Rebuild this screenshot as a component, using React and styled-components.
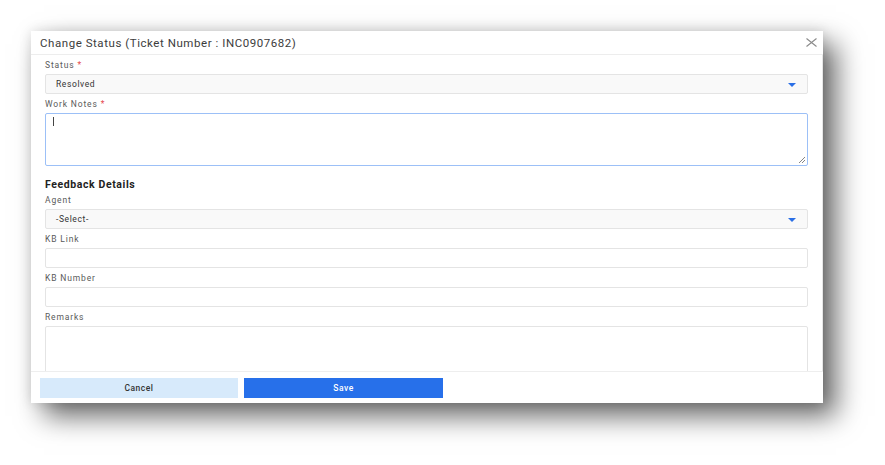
import React from 'react'
import styled, { createGlobalStyle } from 'styled-components'

const GlobalStyle = createGlobalStyle`
  html, body {
    margin: 0;
    padding: 0;
    background: #ffffff;
    font-family: Roboto, "Liberation Sans", Arial, sans-serif;
  }
`

const Page = styled.div`
  width: 885px;
  height: 465px;
  padding: 31px 0 0 31px;
  box-sizing: border-box;
  overflow: hidden;
`

const Dialog = styled.div`
  width: 792px;
  height: 372px;
  background: #fff;
  display: flex;
  flex-direction: column;
  box-shadow: 13px 13px 26px rgba(0, 0, 0, 0.6), 0 0 12px rgba(0, 0, 0, 0.12);
`

const Header = styled.div`
  height: 24px;
  box-sizing: border-box;
  flex: none;
  display: flex;
  align-items: center;
  justify-content: space-between;
  padding: 0 6px 0 9px;
  border-bottom: 1px solid #ededed;
`

const Title = styled.h2`
  margin: 0;
  font-size: 11.5px;
  font-weight: 400;
  letter-spacing: 0.55px;
  color: #3c3c3c;
`

const Close = styled.button`
  border: 0;
  background: none;
  padding: 0;
  width: 12px;
  height: 12px;
  display: flex;
  align-items: center;
  justify-content: center;
  cursor: pointer;
`

const Body = styled.div`
  flex: 1;
  overflow: hidden;
  padding: 0 14px 0 14px;
  border-right: 1px solid #e6e6e6;
`

const Label = styled.label`
  display: block;
  height: 19px;
  line-height: 21px;
  font-size: 8.5px;
  letter-spacing: 0.85px;
  color: #5a5a5a;
`

const Req = styled.span`
  color: #e5484d;
  margin-left: 3px;
`

const SelectBox = styled.div`
  height: 20px;
  box-sizing: border-box;
  border: 1px solid #e4e4e4;
  border-radius: 2px;
  background: #f9f9f9;
  display: flex;
  align-items: center;
  justify-content: space-between;
  padding: 0 11px 0 10px;
  font-size: 8.5px;
  letter-spacing: 0.6px;
  color: #333;
`

const Arrow = styled.span`
  width: 0;
  height: 0;
  border-left: 4px solid transparent;
  border-right: 4px solid transparent;
  border-top: 4px solid #2a6fe6;
  margin-top: 1px;
`

const TextBox = styled.div`
  position: relative;
  height: ${p => p.$h}px;
  box-sizing: border-box;
  border: 1px solid ${p => (p.$focus ? '#9cc0f7' : '#e4e4e4')};
  border-radius: 2px;
  background: #fff;
  padding: 3px 7px;
`

const Caret = styled.span`
  display: block;
  width: 1px;
  height: 9px;
  background: #444;
`

const Grip = styled.svg`
  position: absolute;
  right: 1px;
  bottom: 1px;
`

const Section = styled.h3`
  margin: 0;
  height: 24px;
  padding-top: 12px;
  box-sizing: border-box;
  line-height: 14px;
  font-size: 10.5px;
  font-weight: 700;
  letter-spacing: 0.6px;
  color: #222;
`

const Footer = styled.div`
  height: 32px;
  flex: none;
  border-top: 1px solid #eeeeee;
  box-sizing: border-box;
  display: flex;
  align-items: flex-start;
  gap: 6px;
  padding: 6px 0 0 9px;
`

const Button = styled.button`
  width: ${p => p.$w}px;
  height: 20px;
  border: 0;
  border-radius: 0;
  font-family: inherit;
  font-size: 8.5px;
  font-weight: 500;
  letter-spacing: 0.5px;
  background: ${p => (p.$primary ? '#2770ea' : '#d7eafb')};
  color: ${p => (p.$primary ? '#fff' : '#333')};
`

const Field = ({ label, required, children }) => (
  <>
    <Label>
      {label}
      {required && <Req>*</Req>}
    </Label>
    {children}
  </>
)

export default function App() {
  return (
    <Page>
      <GlobalStyle />
      <Dialog>
        <Header>
          <Title>Change Status (Ticket Number : INC0907682)</Title>
          <Close aria-label="close">
            <svg width="11" height="9" viewBox="0 0 11 9">
              <path d="M0.5 0.5 L10.5 8.5 M10.5 0.5 L0.5 8.5" stroke="#8a8a8a" strokeWidth="1.1" />
            </svg>
          </Close>
        </Header>
        <Body>
          <Field label="Status" required>
            <SelectBox>
              Resolved
              <Arrow />
            </SelectBox>
          </Field>
          <Field label="Work Notes" required>
            <TextBox $h={53} $focus>
              <Caret />
              <Grip width="8" height="8" viewBox="0 0 8 8">
                <path d="M7 1 L1 7 M7 4 L4 7" stroke="#777" strokeWidth="0.9" />
              </Grip>
            </TextBox>
          </Field>
          <Section>Feedback Details</Section>
          <Field label="Agent">
            <SelectBox>
              -Select-
              <Arrow />
            </SelectBox>
          </Field>
          <Field label="KB Link">
            <TextBox $h={20} />
          </Field>
          <Field label="KB Number">
            <TextBox $h={20} />
          </Field>
          <Field label="Remarks">
            <TextBox $h={53} />
          </Field>
        </Body>
        <Footer>
          <Button $w={198}>Cancel</Button>
          <Button $w={199} $primary>Save</Button>
        </Footer>
      </Dialog>
    </Page>
  )
}
